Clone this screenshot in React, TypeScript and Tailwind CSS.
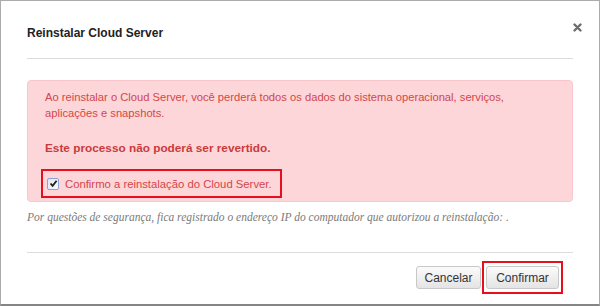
export default function App() {
    return (
        <div className="relative w-[600px] h-[306px] bg-white border border-[#ababab] border-b-2 border-b-[#858585] font-['Liberation_Sans',Arial,sans-serif]">
            <button className="absolute right-[17px] top-[22px] w-[9px] h-[9px] flex items-center justify-center">
                <svg width="9" height="9" viewBox="0 0 9 9">
                    <path d="M1.5 1.5 L7.5 7.5 M7.5 1.5 L1.5 7.5" stroke="#6e6e6e" strokeWidth="2.4" strokeLinecap="round" />
                </svg>
            </button>

            <div className="mx-[26px] h-[58px] pt-[25px] border-b border-[#dcdcdc]">
                <h3 className="text-[12px] leading-[15px] font-bold text-[#222]">Reinstalar Cloud Server</h3>
            </div>

            <div className="mx-[26px] mt-[21px] rounded-[4px] border border-[#f8c6cb] bg-[#fdd6d9] pl-[17px] pt-[8px] pb-[3px] text-[11.2px] leading-[16px] text-[#d2474a]">
                <p>Ao reinstalar o Cloud Server, você perderá todos os dados do sistema operacional, serviços,<br />aplicações e snapshots.</p>
                <p className="mt-[19px] text-[11.8px] font-bold text-[#c93b3d]">Este processo não poderá ser revertido.</p>
                <label className="mt-[13px] -ml-[4px] inline-flex h-[29px] items-center gap-[6px] border-2 border-[#e5101e] pl-[4px] pr-[8px] text-[11.3px]">
                    <span className="flex h-[12px] w-[12px] items-center justify-center rounded-[2px] border border-[#8ea3d4] bg-gradient-to-br from-[#dfe5f3] to-[#fafbfe]">
                        <svg width="9" height="9" viewBox="0 0 9 9">
                            <path d="M1.5 4.5 L3.6 6.8 L7.6 1.8" fill="none" stroke="#1d1d1d" strokeWidth="1.8" />
                        </svg>
                    </span>
                    Confirmo a reinstalação do Cloud Server.
                </label>
            </div>

            <p className="mx-[26px] mt-[7px] text-[11.5px] leading-[16px] italic text-[#7a7a7a] font-['Liberation_Serif','Times_New_Roman',serif]">
                Por questões de segurança, fica registrado o endereço IP do computador que autorizou a reinstalação: .
            </p>

            <div className="mx-[26px] mt-[27px] border-t border-[#dcdcdc] pt-[8px] pr-[10px] flex items-center justify-end gap-[1px]">
                <button className="h-[23px] w-[65px] rounded-[3px] border border-[#c8c8c8] bg-gradient-to-b from-[#fbfbfb] to-[#e4e4e4] text-[12px] text-[#333]">
                    Cancelar
                </button>
                <div className="border-2 border-[#e5101e] px-[2px] py-[3px]">
                    <button className="block h-[23px] w-[73px] rounded-[3px] border border-[#c8c8c8] bg-gradient-to-b from-[#fbfbfb] to-[#e4e4e4] text-[12px] text-[#333]">
                        Confirmar
                    </button>
                </div>
            </div>
        </div>
    )
}
